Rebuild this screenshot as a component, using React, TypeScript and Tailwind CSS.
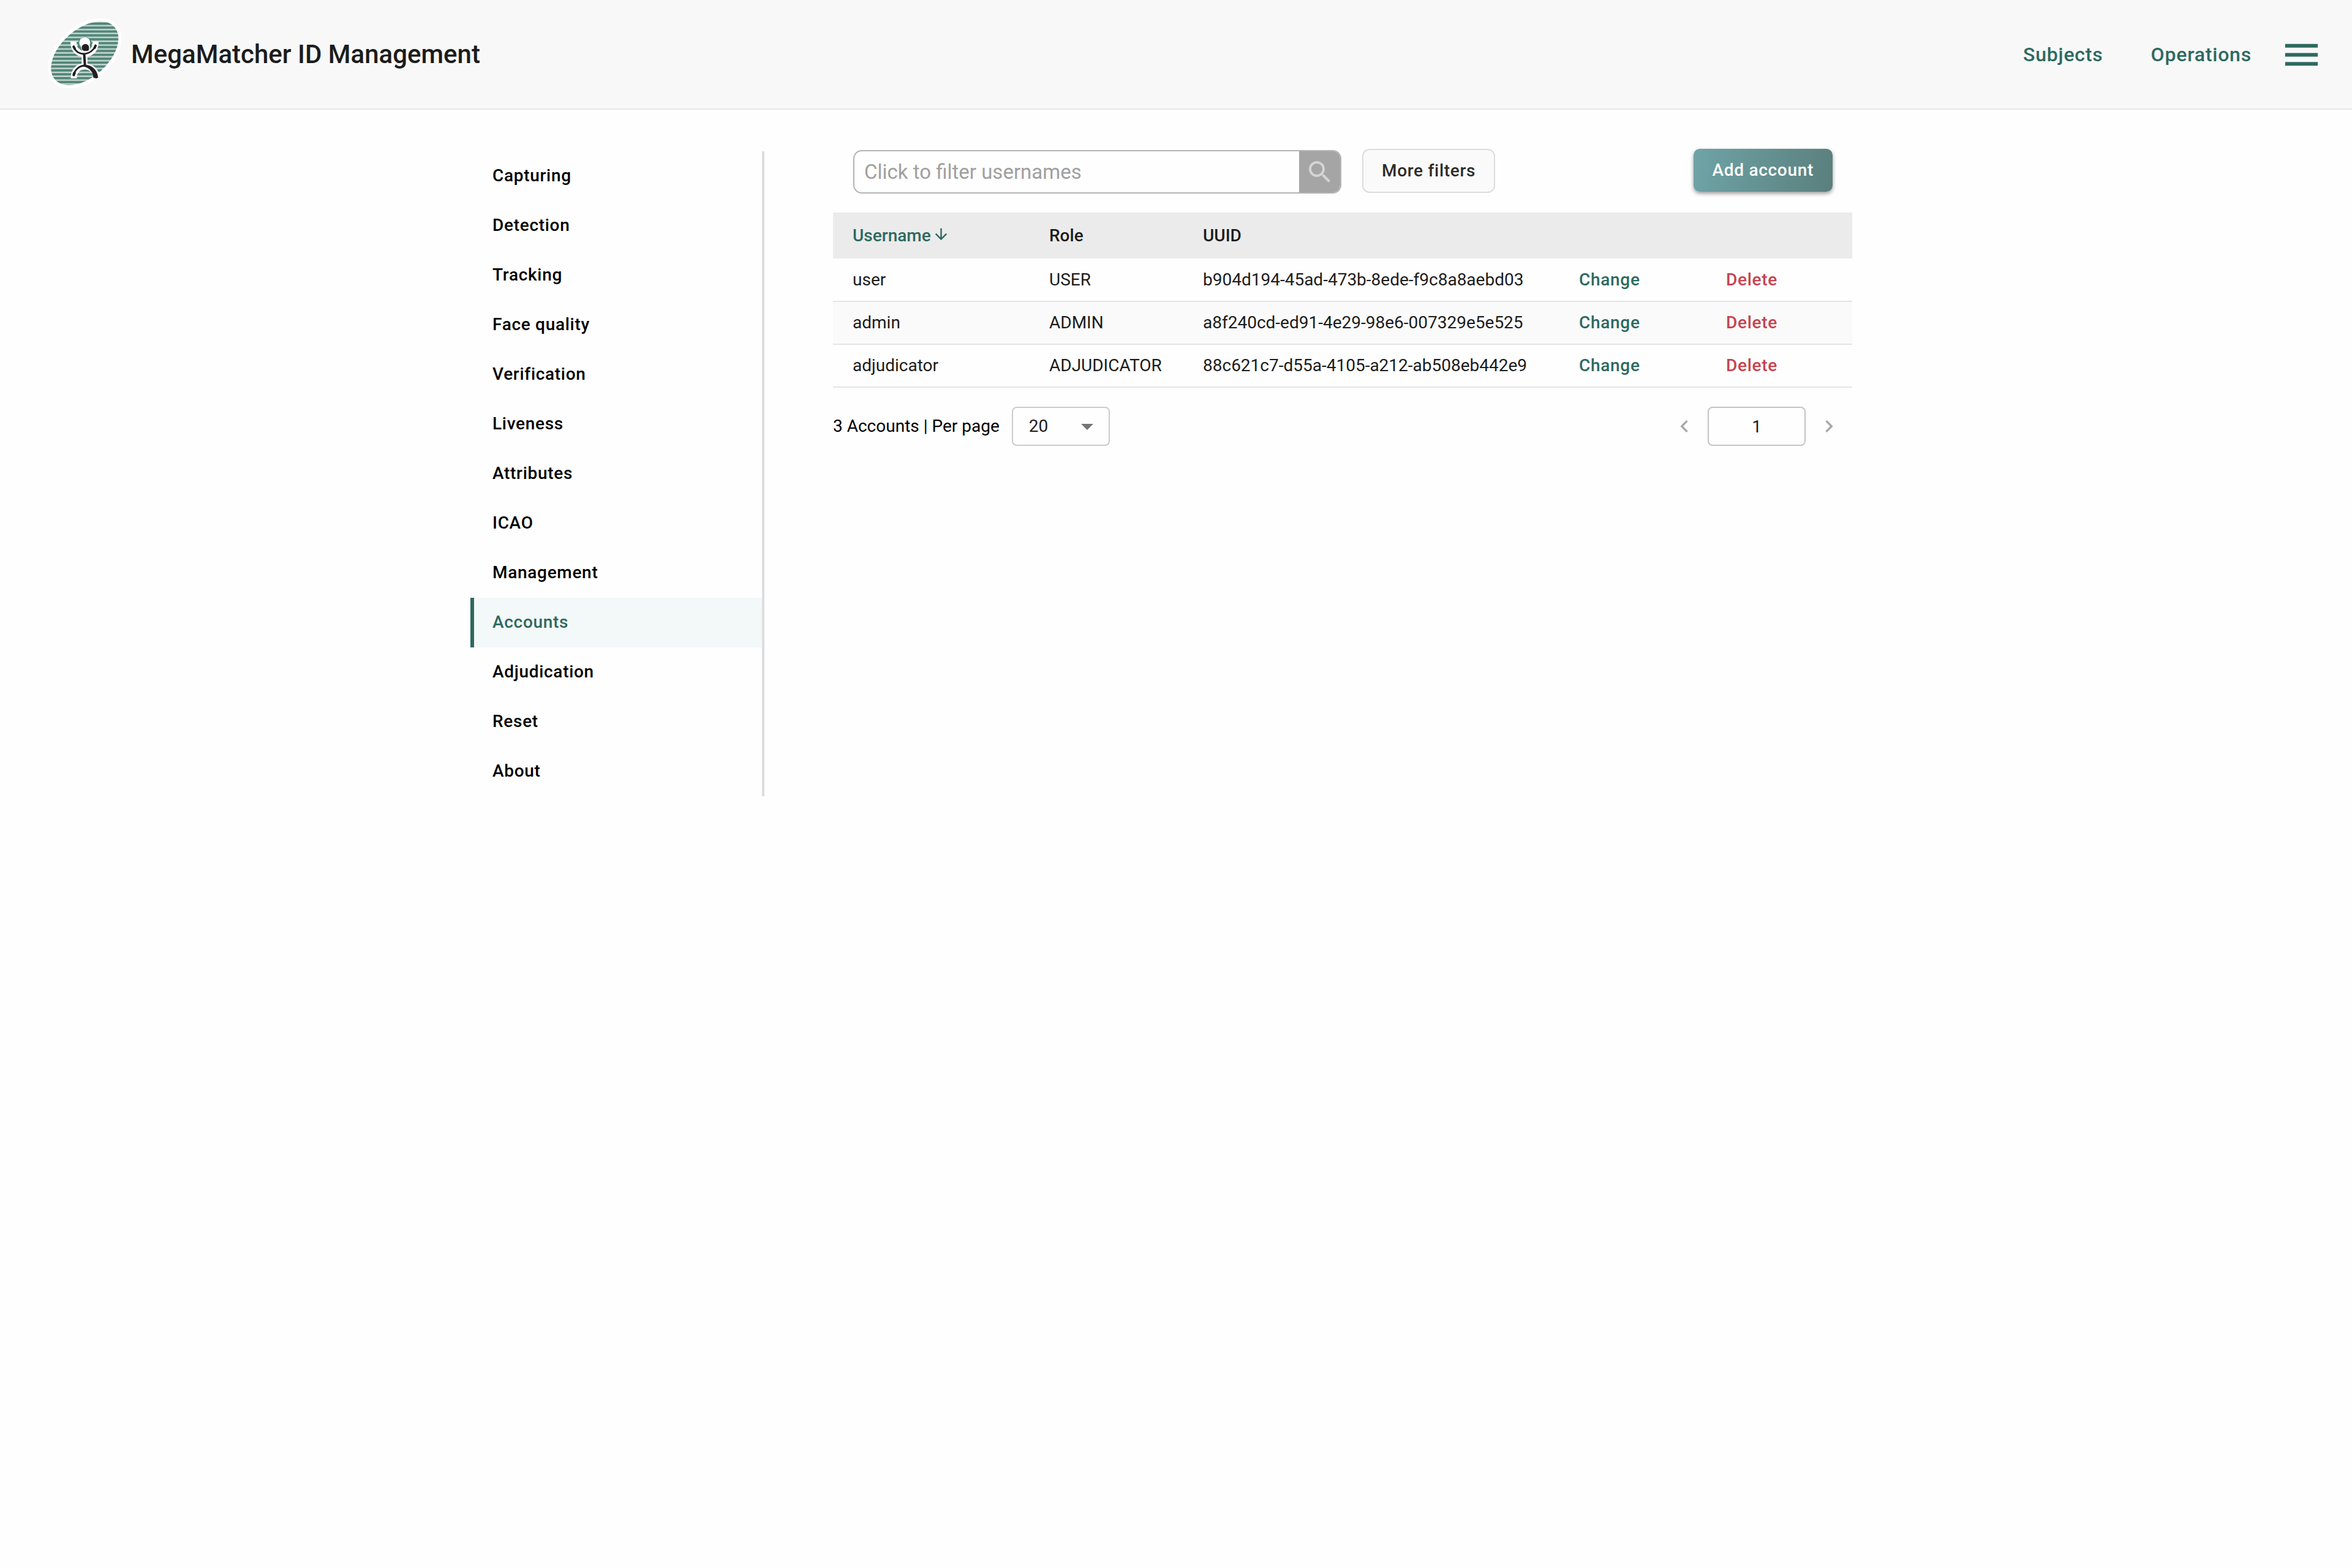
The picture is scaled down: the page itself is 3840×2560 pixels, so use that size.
import {
  MdArrowDownward,
  MdArrowDropDown,
  MdChevronLeft,
  MdChevronRight,
  MdMenu,
  MdSearch,
} from "react-icons/md";

type Account = {
  username: string;
  role: string;
  uuid: string;
};

const NAV_ITEMS = [
  "Capturing",
  "Detection",
  "Tracking",
  "Face quality",
  "Verification",
  "Liveness",
  "Attributes",
  "ICAO",
  "Management",
  "Accounts",
  "Adjudication",
  "Reset",
  "About",
];

const ACCOUNTS: Account[] = [
  {
    username: "user",
    role: "USER",
    uuid: "b904d194-45ad-473b-8ede-f9c8a8aebd03",
  },
  {
    username: "admin",
    role: "ADMIN",
    uuid: "a8f240cd-ed91-4e29-98e6-007329e5e525",
  },
  {
    username: "adjudicator",
    role: "ADJUDICATOR",
    uuid: "88c621c7-d55a-4105-a212-ab508eb442e9",
  },
];

function Logo() {
  return (
    <svg viewBox="0 0 124 118" className="h-[118px] w-[124px]" aria-hidden="true">
      <defs>
        <pattern id="stripes" width="10" height="6.35" y="0.7" patternUnits="userSpaceOnUse">
          <rect width="10" height="6.35" fill="#4f8475" />
          <rect y="3.4" width="10" height="2.95" fill="#a3c0b8" />
          <rect y="4.3" width="10" height="1.1" fill="#d3e1dd" />
        </pattern>
        <clipPath id="oval">
          <ellipse cx="62.300" cy="57" rx="64.8" ry="39.1" transform="rotate(-41.6 62.300 57)" />
        </clipPath>
      </defs>
      <ellipse cx="62.300" cy="57" rx="70" ry="44.6" transform="rotate(-41.6 62.300 57)" fill="#fff" />
      <g clipPath="url(#oval)">
        <rect width="124" height="118" fill="url(#stripes)" />
        <g fill="none" stroke="#fff">
          <path d="M44 38C44 51 51 58 62 58C73 58 80 51 80 38" strokeWidth="10" />
          <path d="M62 55V80" strokeWidth="9.500" />
          <path d="M44.500 98C44.500 85 52 78.500 62.500 78.500C73 78.500 81 86 83 98" strokeWidth="10" />
        </g>
        <circle cx="62.500" cy="42" r="11.500" fill="#4f8475" />
        <circle cx="62.300" cy="39.700" r="9" fill="#fff" />
        <circle cx="63.700" cy="47.300" r="7.500" fill="#fff" />
      </g>
      <path
        d="M57.500 46.500C58.500 42.500 62 41.500 65 42C68.500 43 70 46.500 69.300 50L68.500 52.500C65 53.500 62 53.800 60 52.500C57.500 51 57.200 49 57.500 46.500Z"
        fill="#231f20"
      />
      <g fill="none" stroke="#231f20" strokeLinecap="round">
        <path d="M44 46C47 54 53 58 62 58C71 57 77 51 80 44.500" strokeWidth="2.600" />
        <path d="M44.200 46.200L46 49.500M80 44.500L78.500 48" strokeWidth="4" />
        <path d="M61.500 58.500L62.700 77" strokeWidth="4" />
        <path d="M44.500 92C46.500 83 54 77.500 62 77" strokeWidth="3" />
        <path d="M44.400 92.200L45.500 89" strokeWidth="4.400" />
      </g>
      <path
        d="M60 75.500C74 75 83 84 84.300 96.500L81.500 98L76.500 97C76 88 70.500 80.500 60 78.500Z"
        fill="#231f20"
      />
    </svg>
  );
}

function Header() {
  return (
    <header className="flex items-center justify-between border-b-2 border-[#e4e8eb] bg-[#f8f8f8] pt-[30px] pb-[29px] pr-[47px] pl-[76px]">
      <div className="flex items-center gap-[14px]">
        <Logo />
        <h1 className="text-[42px] leading-[50px] font-medium">
          MegaMatcher ID Management
        </h1>
      </div>
      <div className="flex items-center gap-[46px]">
        <nav className="flex gap-[78px] text-[32px] leading-10 font-medium tracking-wide text-[#2d695f]">
          <a href="#subjects">Subjects</a>
          <a href="#operations">Operations</a>
        </nav>
        <button type="button" aria-label="Menu" className="text-[#2d695f]">
          <MdMenu className="size-[71px]" />
        </button>
      </div>
    </header>
  );
}

function Sidebar() {
  return (
    <nav className="w-[480px] shrink-0 border-r-4 border-[#dedede] text-[28px] leading-[33px] font-medium tracking-wide text-black">
      {NAV_ITEMS.map((item) => (
        <a
          key={item}
          href={`#${item.toLowerCase().replace(" ", "-")}`}
          className={`block border-l-6 pt-[23px] pb-[25px] pl-[30px] ${
            item === "Accounts"
              ? "border-[#2d695f] bg-[#f3f8f8] text-[#2d695f]"
              : "border-transparent"
          }`}
        >
          {item}
        </a>
      ))}
    </nav>
  );
}

function Toolbar() {
  return (
    <div className="flex items-start pr-8 pl-[33px]">
      <form
        role="search"
        className="mt-[2px] flex h-[71px] w-[797px] overflow-hidden rounded-[14px] border-2 border-[#b3b3b3]"
      >
        <input
          type="text"
          aria-label="Filter usernames"
          placeholder="Click to filter usernames"
          className="min-w-0 flex-1 bg-transparent pl-4 text-[33px] outline-none placeholder:text-[#a0a0a0]"
        />
        <button
          type="button"
          aria-label="Search"
          className="flex w-[67px] items-center justify-center bg-[#a5a5a5] text-[#d4d4d4]"
        >
          <MdSearch className="size-12" />
        </button>
      </form>
      <button
        type="button"
        className="ml-[34px] h-[72px] rounded-[12px] border-2 border-[#dcdcdc] bg-[#fafafa] px-[30px] text-[28px] font-medium tracking-wide text-[#2b2b2b]"
      >
        More filters
      </button>
      <button
        type="button"
        className="ml-auto h-[70px] rounded-[10px] bg-linear-100 from-[#6fa4a7] to-[#5a7f7d] px-[31px] text-[28px] font-medium tracking-wide text-white shadow-[0_3px_6px_rgba(0,0,0,0.4)]"
      >
        Add account
      </button>
    </div>
  );
}

function AccountsTable() {
  return (
    <table className="mt-[31px] w-full table-fixed text-left text-[28px] leading-9">
      <colgroup>
        <col className="w-[321px]" />
        <col className="w-[251px]" />
        <col />
        <col className="w-[240px]" />
        <col className="w-[238px]" />
      </colgroup>
      <thead>
        <tr className="h-[75px] bg-[#ebebeb]">
          <th className="pl-8 font-medium text-[#2d695f]">
            <button type="button" className="flex items-center gap-[2px]">
              Username
              <MdArrowDownward className="mb-1 size-[29px]" />
            </button>
          </th>
          <th className="pl-8 font-medium">Role</th>
          <th className="pl-8 font-medium">UUID</th>
          <th></th>
          <th></th>
        </tr>
      </thead>
      <tbody>
        {ACCOUNTS.map((a) => (
          <tr
            key={a.uuid}
            className="h-[70px] border-b-2 border-[#e4e4e4] even:bg-[#fafafa]"
          >
            <td className="pl-8">{a.username}</td>
            <td className="pl-8">{a.role}</td>
            <td className="pl-8">{a.uuid}</td>
            <td className="pl-8">
              <button type="button" className="font-medium tracking-wide text-[#2d695f]">
                Change
              </button>
            </td>
            <td className="pl-8">
              <button type="button" className="font-medium tracking-wide text-[#c74350]">
                Delete
              </button>
            </td>
          </tr>
        ))}
      </tbody>
    </table>
  );
}

function Pagination() {
  return (
    <div className="mt-[31px] flex items-center justify-between pr-[18px] text-[28px] text-black">
      <div className="flex items-center gap-5">
        <label htmlFor="per-page">3 Accounts | Per page</label>
        <div className="relative">
          <select
            id="per-page"
            defaultValue="20"
            className="block h-16 w-40 appearance-none rounded-[8px] border-2 border-[#cbcbcb] bg-transparent pl-[26px] text-[#1c1c1c]"
          >
            <option>10</option>
            <option>20</option>
            <option>50</option>
          </select>
          <MdArrowDropDown className="pointer-events-none absolute top-2 right-[13px] size-12 text-[#757575]" />
        </div>
      </div>
      <div className="flex items-center gap-[18px] text-[#a6a6a6]">
        <button type="button" aria-label="Previous page">
          <MdChevronLeft className="size-10" />
        </button>
        <input
          type="text"
          aria-label="Page"
          defaultValue="1"
          className="h-16 w-40 rounded-[8px] border-2 border-[#c4c4c4] bg-transparent text-center text-[#1c1c1c]"
        />
        <button type="button" aria-label="Next page">
          <MdChevronRight className="size-10" />
        </button>
      </div>
    </div>
  );
}

export default function App() {
  return (
    <div className="min-h-screen bg-[#fefefe] font-[Roboto,sans-serif] text-[#1c1c1c]">
      <Header />
      <div className="mx-auto flex w-3/5 items-start">
        <div className="flex pt-[68px]">
          <Sidebar />
        </div>
        <main className="min-w-0 flex-1 pt-16 pr-12 pl-28">
          <Toolbar />
          <AccountsTable />
          <Pagination />
        </main>
      </div>
    </div>
  );
}
